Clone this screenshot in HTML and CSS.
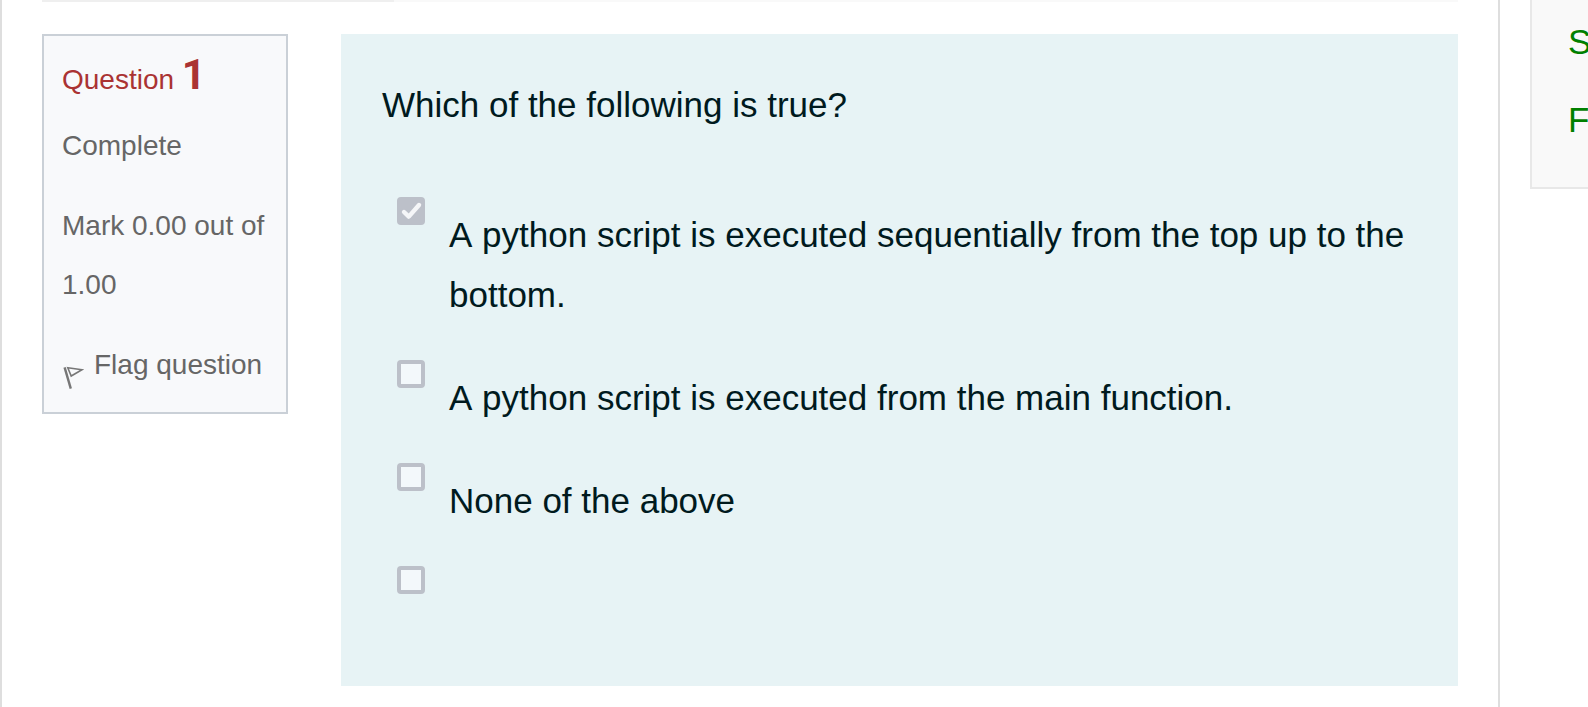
FILE: index.html
```html
<!DOCTYPE html>
<html lang="en">
<head>
<meta charset="utf-8">
<title>Quiz review</title>
<link rel="stylesheet" href="styles.css">
</head>
<body>
<div class="page">
  <main class="region">
    <div class="summary-edge"><span class="summary-label"></span></div>
    <div class="question">
      <section class="info">
        <h3 class="number">Question <span class="digit">1</span></h3>
        <p class="info-line">Complete</p>
        <p class="info-line">Mark 0.00 out of 1.00</p>
        <a class="flag info-line" href="#">
          <svg class="flag-icon" viewBox="0 0 22 24" aria-hidden="true">
            <path d="M2.6 1.4 8.8 22.6" stroke-width="2.4"/>
            <path d="M5.8 1.8 20 3.8 9.2 10Z" stroke-width="1.6"/>
          </svg>
          <span>Flag question</span>
        </a>
      </section>
      <form class="formulation">
        <p class="prompt">Which of the following is true?</p>
        <div class="answers">
          <div class="answer">
            <input class="box" type="checkbox" id="choice0" checked disabled>
            <label class="choice" for="choice0">A python script is executed sequentially from the top up to the bottom.</label>
          </div>
          <div class="answer">
            <input class="box" type="checkbox" id="choice1" disabled>
            <label class="choice" for="choice1">A python script is executed from the main function.</label>
          </div>
          <div class="answer">
            <input class="box" type="checkbox" id="choice2" disabled>
            <label class="choice" for="choice2">None of the above</label>
          </div>
          <div class="answer">
            <input class="box" type="checkbox" id="choice3" disabled>
            <label class="choice" for="choice3"></label>
          </div>
        </div>
      </form>
    </div>
  </main>
  <aside class="side">
    <nav class="block">
      <a class="side-link" href="#">S</a>
      <a class="side-link" href="#">F</a>
    </nav>
  </aside>
</div>
</body>
</html>
```

FILE: styles.css
```css
* {
  box-sizing: border-box;
}

body {
  margin: 0;
  background: #fff;
  color: #001a1e;
  font-family: "Liberation Sans", Arial, sans-serif;
  font-size: 35px;
  font-kerning: none;
  line-height: 60px;
  overflow: hidden;
}

p,
h3 {
  margin: 0;
}

.page {
  display: flex;
  gap: 30px;
  min-height: 100vh;
}

.region {
  flex: 1;
  min-width: 0;
  padding: 0 40px;
  border: solid #dedede;
  border-width: 0 2px;
}

.summary-edge {
  display: flex;
  height: 2px;
  margin-bottom: 32px;
  background: #f9f9f9;
}

.summary-label {
  width: 352px;
  background: #efefef;
}

.question {
  display: flex;
  align-items: flex-start;
  gap: 53px;
}

.info {
  flex: none;
  width: 246px;
  padding: 18px;
  background: #f8f9fb;
  border: 2px solid #cad0d7;
  color: #666;
  font-size: 28px;
  line-height: 59px;
}

.number {
  margin-bottom: 15px;
  color: #a33;
  font-size: 28px;
  font-weight: 400;
  line-height: 42px;
}

.digit {
  font-family: Roboto, "Liberation Sans", sans-serif;
  font-size: 42px;
  font-weight: 700;
}

.info-line + .info-line {
  margin-top: 21px;
}

.flag {
  display: flex;
  align-items: flex-end;
  gap: 10px;
  color: inherit;
  text-decoration: none;
  white-space: nowrap;
}

.flag-icon {
  flex: none;
  width: 22px;
  height: 24px;
  margin-bottom: 4px;
  fill: none;
  stroke: #777;
}

.formulation {
  flex: 1;
  min-width: 0;
  padding: 41px 41px 52px;
  background: #e7f3f5;
}

.answers {
  display: grid;
  gap: 35px;
  margin-top: 62px;
  padding-left: 15px;
}

.answer {
  display: flex;
  align-items: flex-start;
  gap: 24px;
  min-height: 68px;
}

.choice {
  flex: 1;
  padding-top: 8px;
}

.box {
  appearance: none;
  flex: none;
  width: 28px;
  height: 28px;
  margin: 0;
  background: #f3f8fb;
  border: 4px solid #bcc0c9;
  border-radius: 4px;
}

.box:checked {
  border: 0;
  background: #bcc0c9 url("data:image/svg+xml,%3Csvg xmlns='http://www.w3.org/2000/svg' viewBox='0 0 28 28'%3E%3Cpath d='M7 15 11.8 19.6 22 8' fill='none' stroke='%23f5f6f8' stroke-width='4.4' stroke-linecap='round' stroke-linejoin='round'/%3E%3C/svg%3E");
}

.side {
  flex: none;
  width: 58px;
}

.block {
  display: grid;
  gap: 18px;
  padding: 12px 0 37px 36px;
  background: #f9f9f9;
  border: solid #e8e8e8;
  border-width: 0 0 2px 2px;
}

.side-link {
  color: #008000;
  text-decoration: none;
}
```
